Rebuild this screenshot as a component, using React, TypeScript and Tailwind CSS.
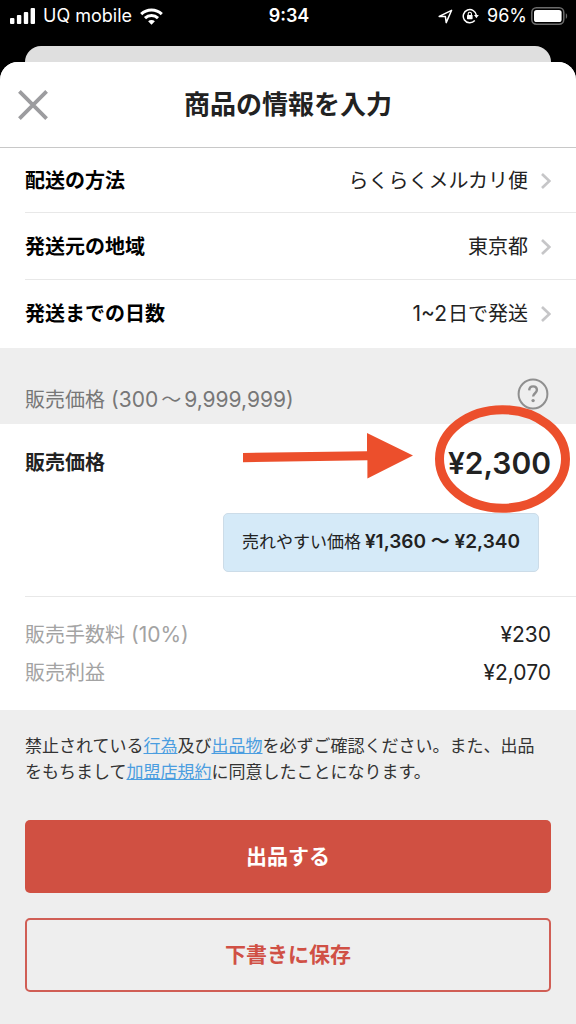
import { useState } from "react";

const deliveryRows = [
  { label: "配送の方法", value: "らくらくメルカリ便" },
  { label: "発送元の地域", value: "東京都" },
  { label: "発送までの日数", days: "1~2", value: "日で発送" },
];

const feeRows = [
  { label: "販売手数料", rate: "(10%)", value: "¥230" },
  { label: "販売利益", value: "¥2,070" },
];

function StatusBar() {
  return (
    <div className="grid h-[32px] grid-cols-[1fr_auto_1fr] items-center pl-[10px] pr-[8px] text-lg text-white">
      <div className="flex items-center gap-2">
        <svg width="25" height="16" viewBox="0 0 25 16" fill="currentColor">
          <rect x="0" y="10" width="4.4" height="6" rx="1" />
          <rect x="6.9" y="7" width="4.4" height="9" rx="1" />
          <rect x="13.8" y="4" width="4.4" height="12" rx="1" />
          <rect x="20.6" y="0" width="4.4" height="16" rx="1" />
        </svg>
        <span>UQ mobile</span>
        <svg width="23" height="17" viewBox="0 0 23 17" fill="none" stroke="currentColor" strokeWidth="3">
          <path d="M1.2 6.2a14.8 14.8 0 0 1 20.6 0" />
          <path d="M5 10.2a9.4 9.4 0 0 1 13 0" />
          <path d="M11.5 16.8l-3.4-3.5a4.9 4.9 0 0 1 6.8 0z" fill="currentColor" stroke="none" />
        </svg>
      </div>
      <span className="text-lg font-semibold">9:34</span>
      <div className="flex items-center justify-end">
        <svg className="mr-[9px]" width="15" height="15" viewBox="0 0 15 15" fill="none" stroke="currentColor" strokeWidth="1.5" strokeLinejoin="round">
          <path d="M1.2 7.4 13.6 1.3 8.2 13.6 7.4 7.6z" />
        </svg>
        <svg className="mr-[8px]" width="17" height="16" viewBox="0 0 17 16" fill="none" stroke="currentColor" strokeWidth="1.5">
          <path d="M12.8 12.6A6.6 6.6 0 1 1 14.4 7.4" />
          <path d="M12 7h4.8l-2.4 3.2z" fill="currentColor" stroke="none" />
          <rect x="5" y="7" width="5.6" height="4.2" rx=".6" fill="currentColor" stroke="none" />
          <path d="M6.2 7.2V5.8a1.6 1.6 0 0 1 3.2 0v1.4" strokeWidth="1.1" />
        </svg>
        <span className="mr-[4px]">96%</span>
        <svg width="37" height="18" viewBox="0 0 37 18" fill="none">
          <rect x=".8" y=".8" width="32" height="16.4" rx="4.6" stroke="#6b6b6b" strokeWidth="1.5" />
          <rect x="3" y="3" width="27.6" height="12" rx="2.6" fill="#fff" />
          <path d="M34.8 6.2c1.8.8 1.8 4.8 0 5.6z" fill="#6b6b6b" />
        </svg>
      </div>
    </div>
  );
}

function Chevron() {
  return (
    <svg width="10" height="16" viewBox="0 0 10 16" fill="none" stroke="#c6c6c8" strokeWidth="2.7">
      <path d="M1 1l7.4 7L1 15" />
    </svg>
  );
}

// hand-drawn arrow and ring pointing at the selling price
function PriceMarker() {
  return (
    <svg
      className="pointer-events-none absolute -top-6 right-0"
      width="340"
      height="116"
      viewBox="236 400 340 116"
      fill="none"
    >
      <path d="M243 453l124-1.8V433l46 22.5-45.6 23V460.3L243 462.3z" fill="#ec4f2c" />
      <ellipse cx="502.5" cy="459" rx="63" ry="49.3" stroke="#ec4f2c" strokeWidth="9" />
    </svg>
  );
}

export default function App() {
  const [price, setPrice] = useState("¥2,300");

  return (
    <div className="min-h-screen bg-[linear-gradient(#000_100px,#eee_100px)] font-['Inter','Noto_Sans_CJK_JP',sans-serif] text-[#222]">
      <StatusBar />
      <div className="mx-[25px] mt-[14px] h-4 rounded-t-2xl bg-[#dfdfdf]" />

      <main className="overflow-hidden rounded-t-[18px] bg-[#eee]">
        <header className="grid h-[86px] grid-cols-[1fr_auto_1fr] items-center border-b border-[#c8c8c8] bg-white px-[18px]">
          <button type="button" aria-label="閉じる" className="justify-self-start">
            <svg width="30" height="30" viewBox="0 0 30 30" stroke="#9c9c9f" strokeWidth="3.8">
              <path d="M1.4 1.4l27.2 27.2M28.6 1.4L1.4 28.6" />
            </svg>
          </button>
          <h1 className="text-[26px] font-semibold">商品の情報を入力</h1>
        </header>

        <ul className="bg-white pb-px pl-[25px] text-xl">
          {deliveryRows.map((row) => (
            <li key={row.label} className="h-[67px] border-b border-[#e8e8e8] first:h-[65px] last:border-b-0">
              <button type="button" className="flex h-full w-full items-center pr-[25px] pt-px">
                <span className="font-semibold text-black">{row.label}</span>
                <span className="ml-auto mr-[13px] flex items-baseline">
                  {row.days && <span className="mr-px text-[21px]">{row.days}</span>}
                  <span>{row.value}</span>
                </span>
                <Chevron />
              </button>
            </li>
          ))}
        </ul>

        <div className="flex h-[76px] items-end justify-between px-[25px] pb-[10px] text-xl text-[#777]">
          <h2 className="flex items-baseline">
            <span>販売価格</span>
            <span className="ml-[6px] text-[21px]">(300</span>
            <span className="mx-[3px]">～</span>
            <span className="text-[21px]">9,999,999)</span>
          </h2>
          <button type="button" aria-label="ヘルプ" className="mb-[4px] mr-[2px]">
            <svg width="32" height="32" viewBox="0 0 32 32" fill="none" stroke="#8f8f8f" strokeWidth="2">
              <circle cx="16" cy="16" r="14.4" />
              <path d="M12.2 12.4c.1-2.6 1.7-4 3.9-4s3.8 1.4 3.8 3.7c0 3.1-3.8 3.2-3.8 6.5" strokeWidth="2.4" />
              <circle cx="16.1" cy="22.6" r="1.7" fill="#8f8f8f" stroke="none" />
            </svg>
          </button>
        </div>

        <section className="bg-white pb-[18px]">
          <div className="relative flex h-[78px] items-center px-[25px]">
            <label htmlFor="price" className="shrink-0 text-xl font-semibold">
              販売価格
            </label>
            <input
              id="price"
              value={price}
              onChange={(e) => setPrice(e.target.value)}
              className="w-full min-w-0 text-right text-3xl font-semibold outline-none"
            />
            <PriceMarker />
          </div>
          <div className="ml-auto mr-[37px] mt-[11px] flex h-[59px] w-fit items-center rounded-[5px] border border-[#ccdce8] bg-[#d5eaf8] px-[18px]">
            <span className="text-[17px]">売れやすい価格</span>
            <span className="ml-1 text-[19px] font-semibold">¥1,360 〜 ¥2,340</span>
          </div>
          <dl className="ml-[25px] mt-6 border-t border-[#e8e8e8] pr-[25px] pt-[19px] text-xl">
            {feeRows.map((row) => (
              <div key={row.label} className="flex h-[38px] items-center justify-between">
                <dt className="flex items-baseline gap-[6px] text-[#a3a3a3]">
                  <span>{row.label}</span>
                  {row.rate && <span className="text-[21px]">{row.rate}</span>}
                </dt>
                <dd className="text-[21px]">{row.value}</dd>
              </div>
            ))}
          </dl>
        </section>

        <div className="px-[25px] pb-8 pt-[23px]">
          <p className="text-[17px] leading-[26px] text-[#333]">
            <span>禁止されている</span>
            <a href="#prohibited-acts" className="text-[#4a9de0] underline">行為</a>
            <span>及び</span>
            <a href="#prohibited-items" className="text-[#4a9de0] underline">出品物</a>
            <span>を必ずご確認ください。</span>
            <span>また、出品</span>
            <span>をもちまして</span>
            <a href="#terms" className="text-[#4a9de0] underline">加盟店規約</a>
            <span>に同意したことになります。</span>
          </p>
          <div className="mt-[35px] flex flex-col gap-[25px] text-[21px] font-semibold">
            <button type="button" className="h-[73px] rounded-[5px] bg-[#d05042] text-white">
              出品する
            </button>
            <button type="button" className="h-[74px] rounded-[5px] border-2 border-[#d05e55] text-[#d05045]">
              下書きに保存
            </button>
          </div>
        </div>
      </main>
    </div>
  );
}
